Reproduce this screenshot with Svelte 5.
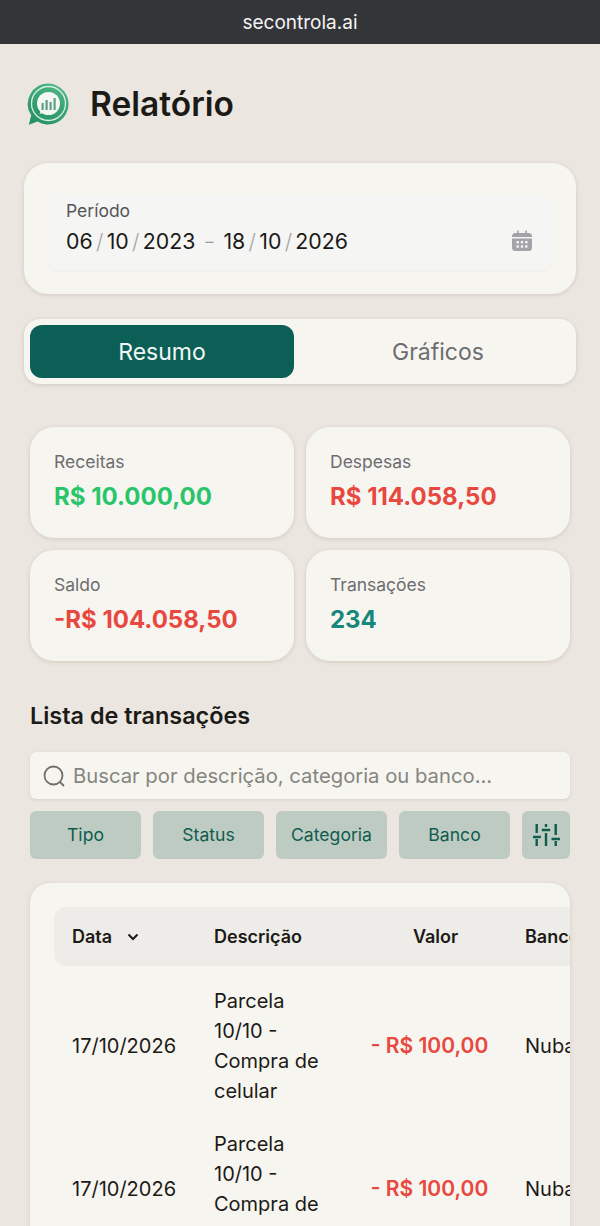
<script>
  const stats = [
    { label: "Receitas", value: "R$ 10.000,00", tone: "green" },
    { label: "Despesas", value: "R$ 114.058,50", tone: "red" },
    { label: "Saldo", value: "-R$ 104.058,50", tone: "red" },
    { label: "Transações", value: "234", tone: "teal" }
  ];
  const filters = ["Tipo", "Status", "Categoria", "Banco"];
  const rows = [
    { date: "17/10/2026", desc: "Parcela 10/10 - Compra de celular", value: "- R$ 100,00", bank: "Nubank" },
    { date: "17/10/2026", desc: "Parcela 10/10 - Compra de celular", value: "- R$ 100,00", bank: "Nubank" }
  ];
</script>

<div class="page">
  <div class="urlbar">secontrola.ai</div>

  <header class="title">
    <svg class="logo" width="44" height="44" viewBox="0 0 44 44">
      <defs>
        <linearGradient id="logo-green" x1="0.700" y1="0" x2="0.200" y2="1">
          <stop offset="0" stop-color="#4cb585" />
          <stop offset="1" stop-color="#23915f" />
        </linearGradient>
      </defs>
      <path d="M22 1.500a20.500 20.500 0 1 1-10.500 38.100L2.800 42.800l2.400-9.500A20.500 20.500 0 0 1 22 1.500z" fill="url(#logo-green)" />
      <circle cx="22.500" cy="21.500" r="17" fill="none" stroke="#d8efe2" stroke-width="1.300" />
      <circle cx="22.500" cy="21.500" r="11.500" fill="#f4f8f4" />
      <path d="M15 29l-1.500 3 5-1.500z" fill="#f4f8f4" />
      <rect x="15.500" y="21" width="2.200" height="7" fill="#5d9f85" />
      <rect x="19.500" y="18" width="2.200" height="10" fill="#5d9f85" />
      <rect x="23.500" y="20" width="2.200" height="8" fill="#5d9f85" />
      <rect x="27.500" y="16" width="2.200" height="12" fill="#5d9f85" />
    </svg>
    <h1>Relatório</h1>
  </header>

  <section class="period-card">
    <div class="period">
      <span class="period-label">Período</span>
      <div class="dates">
        <span>06</span><i>/</i><span>10</span><i>/</i><span>2023</span>
        <b>–</b>
        <span>18</span><i>/</i><span>10</span><i>/</i><span>2026</span>
        <svg class="cal" width="24" height="24" viewBox="0 0 24 24" fill="#a3a3a8">
          <path d="M7 1.500h1.600V4h6.800V1.500H17V4h1.500A3.500 3.500 0 0 1 22 7.500V8H2v-.5A3.500 3.500 0 0 1 5.500 4H7z" />
          <path d="M2 9.500h20v9a3.500 3.500 0 0 1-3.500 3.500h-13A3.500 3.500 0 0 1 2 18.500z" />
          <g fill="#f5f5f5">
            <rect x="6.500" y="12" width="2.400" height="2.400" /><rect x="10.800" y="12" width="2.400" height="2.400" /><rect x="15.100" y="12" width="2.400" height="2.400" />
            <rect x="6.500" y="16.300" width="2.400" height="2.400" /><rect x="10.800" y="16.300" width="2.400" height="2.400" /><rect x="15.100" y="16.300" width="2.400" height="2.400" />
          </g>
        </svg>
      </div>
    </div>
  </section>

  <nav class="tabs">
    <button class="tab active">Resumo</button>
    <button class="tab">Gráficos</button>
  </nav>

  <section class="stats">
    {#each stats as s}
      <div class="stat">
        <span class="stat-label">{s.label}</span>
        <strong class={s.tone}>{s.value}</strong>
      </div>
    {/each}
  </section>

  <h2>Lista de transações</h2>

  <div class="search">
    <svg width="24" height="24" viewBox="0 0 24 24" fill="none" stroke="#6f6f6f" stroke-width="1.800" stroke-linecap="round">
      <circle cx="11.500" cy="11.500" r="9" /><path d="M18 18l3.500 3.500" />
    </svg>
    <span>Buscar por descrição, categoria ou banco...</span>
  </div>

  <div class="filters">
    {#each filters as f}
      <button class="filter">{f}</button>
    {/each}
    <button class="filter icon" aria-label="Filtros">
      <svg width="27" height="22" viewBox="0 0 27 22" fill="none" stroke="#0f5c4e" stroke-width="2.400">
        <path d="M3.700 0v9M3.700 15v7M13 0v3M13 9v13M22.700 0v11M22.700 17v5M-0.500 13h8.400M8.800 6h8.400M18.500 15h8.400" />
      </svg>
    </button>
  </div>

  <section class="table-card">
    <table>
      <thead>
        <tr>
          <th class="c-date">
            <span class="sort">Data
              <svg width="12" height="8" viewBox="0 0 12 8" fill="none" stroke="#1c1a17" stroke-width="2"><path d="M1.500 1.500L6 6l4.500-4.500" /></svg>
            </span>
          </th>
          <th class="c-desc">Descrição</th>
          <th class="c-value">Valor</th>
          <th class="c-bank">Banco</th>
        </tr>
      </thead>
      <tbody>
        {#each rows as r}
          <tr>
            <td>{r.date}</td>
            <td>{r.desc}</td>
            <td class="amount">{r.value}</td>
            <td>{r.bank}</td>
          </tr>
        {/each}
      </tbody>
    </table>
  </section>
</div>

<style>
  :global(body) {
    margin: 0;
    background: #ebe6df;
  }

  .page {
    height: 1226px;
    overflow: hidden;
    background: #ebe6df;
    font-family: Inter, "Liberation Sans", sans-serif;
    color: #1c1a17;
  }

  .urlbar {
    height: 44px;
    display: flex;
    align-items: center;
    justify-content: center;
    background: #333538;
    color: #f4f4f4;
    font-size: 19px;
  }

  .title {
    height: 119px;
    padding-left: 26px;
    display: flex;
    align-items: center;
    box-sizing: border-box;
  }

  .logo {
    flex: none;
  }

  h1 {
    margin: 0 0 0 20px;
    font-size: 33.500px;
    font-weight: 600;
  }

  .period-card {
    margin: 0 24px;
    height: 131px;
    padding: 32px 24px 24px;
    box-sizing: border-box;
    background: #f7f5f0;
    border-radius: 24px;
    box-shadow: 0 1px 4px rgba(90, 80, 60, 0.18);
  }

  .period {
    height: 75px;
    padding: 6px 18px 0;
    box-sizing: border-box;
    background: #f5f5f4;
    border-radius: 12px;
    box-shadow: 0 1px 2px rgba(90, 80, 60, 0.05);
  }

  .period-label {
    display: block;
    font-size: 17.500px;
    line-height: 20px;
    color: #55555a;
  }

  .dates {
    margin-top: 6px;
    display: flex;
    align-items: center;
    font-size: 21.300px;
    line-height: 28px;
    color: #1c1a17;
  }

  .dates i {
    font-style: normal;
    font-weight: 300;
    color: #a5a5a5;
    margin: 0 3.300px;
  }

  .dates b {
    font-weight: 400;
    font-size: 16px;
    color: #9a9a9a;
    margin: 0 10px;
  }

  .cal {
    margin-left: auto;
  }

  .tabs {
    margin: 25px 24px 0;
    height: 65px;
    padding: 6px;
    box-sizing: border-box;
    display: flex;
    gap: 12px;
    background: #f7f5f0;
    border-radius: 16px;
    box-shadow: 0 1px 4px rgba(90, 80, 60, 0.18);
  }

  .tab {
    flex: 1;
    border: 0;
    background: none;
    border-radius: 12px;
    font: inherit;
    font-size: 23px;
    color: #6d6d70;
  }

  .tab.active {
    background: #0c5f56;
    color: #f2f6f4;
  }

  .stats {
    margin: 43px 30px 0;
    display: grid;
    grid-template-columns: 1fr 1fr;
    gap: 12px;
  }

  .stat {
    height: 111px;
    padding: 25px 24px 0;
    box-sizing: border-box;
    background: #f7f5f0;
    border-radius: 24px;
    box-shadow: 0 1px 4px rgba(90, 80, 60, 0.18);
  }

  .stat-label {
    display: block;
    font-size: 17.500px;
    line-height: 20px;
    color: #6d6d70;
  }

  .stat strong {
    display: block;
    margin-top: 10px;
    font-size: 24px;
    line-height: 30px;
    font-weight: 700;
  }

  .green { color: #2ac56b; }
  .red { color: #e8483f; }
  .teal { color: #16877a; }

  h2 {
    margin: 41px 30px 0;
    font-size: 23.400px;
    line-height: 28px;
    font-weight: 600;
  }

  .search {
    margin: 22px 30px 0;
    height: 47px;
    padding-left: 12px;
    display: flex;
    align-items: center;
    gap: 7px;
    background: #f7f5f0;
    border-radius: 6px;
    box-shadow: 0 1px 3px rgba(90, 80, 60, 0.15);
    font-size: 20.250px;
    color: #85857f;
  }

  .filters {
    margin: 12px 30px 0;
    display: flex;
    gap: 12px;
  }

  .filter {
    flex: none;
    width: 111px;
    height: 48px;
    padding: 0 0 2px;
    border: 0;
    border-radius: 6px;
    background: #bdcbc3;
    font: inherit;
    font-size: 17.600px;
    color: #0f5c4e;
  }

  .filter.icon {
    width: 48px;
    padding: 0;
    display: flex;
    align-items: center;
    justify-content: center;
  }

  .table-card {
    margin: 24px 30px 0;
    padding: 24px 0 0 24px;
    overflow: hidden;
    background: #f7f5f0;
    border-radius: 20px 20px 0 0;
    box-shadow: 0 1px 4px rgba(90, 80, 60, 0.15);
  }

  table {
    width: 602px;
    margin-top: -16px;
    table-layout: fixed;
    border-collapse: separate;
    border-spacing: 0 16px;
    font-size: 20px;
    line-height: 30px;
  }

  th {
    height: 59px;
    padding: 0;
    box-sizing: border-box;
    text-align: left;
    font-size: 18px;
    font-weight: 600;
    background: #eeece8;
  }

  th:first-child {
    border-radius: 12px 0 0 12px;
  }

  th:last-child {
    border-radius: 0 12px 12px 0;
  }

  .c-date { width: 160px; padding-left: 18px; }
  .c-desc { width: 120px; }
  .c-value { width: 191px; padding-left: 12px; text-align: center; }
  .c-bank { width: 131px; }

  .sort {
    display: inline-flex;
    align-items: center;
    gap: 15px;
  }

  td {
    height: 127px;
    padding: 0;
    vertical-align: middle;
  }

  td:first-child {
    padding-left: 18px;
  }

  td.amount {
    color: #e8483f;
    font-size: 21px;
    font-weight: 600;
    text-align: center;
  }
</style>
